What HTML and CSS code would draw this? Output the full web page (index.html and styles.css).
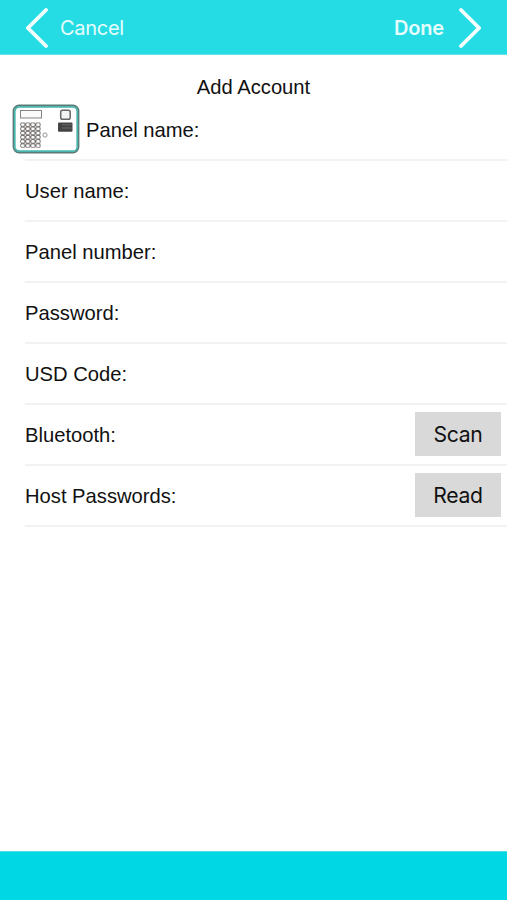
FILE: index.html
```html
<!DOCTYPE html>
<html lang="en">
<head>
<meta charset="utf-8">
<title>Add Account</title>
<link rel="stylesheet" href="styles.css">
</head>
<body>
<header class="bar">
  <div class="nav back">
    <svg width="22" height="40" viewBox="0 0 22 40"><path d="M20 2 2 20 20 38" /></svg>
    <span class="cancel">Cancel</span>
  </div>
  <div class="nav">
    <span class="done">Done</span>
    <svg width="22" height="40" viewBox="0 0 22 40"><path d="M2 2 20 20 2 38" /></svg>
  </div>
</header>
<main>
  <h1>Add Account</h1>
  <div class="row first">
    <svg class="panel" width="68" height="50" viewBox="0 0 68 50">
      <defs>
        <pattern id="keys" x="8.2" y="18.500" width="5.100" height="4.200" patternUnits="userSpaceOnUse">
          <ellipse cx="2.550" cy="2.100" rx="2.150" ry="2" fill="#fff" stroke="#6b6663" stroke-width=".9"/>
        </pattern>
      </defs>
      <rect x="1.500" y="1.500" width="65" height="47" rx="5.500" fill="#fff" stroke="#5c7b77" stroke-width="1.800"/>
      <rect x="2.800" y="2.800" width="62.400" height="44.400" rx="4.500" fill="none" stroke="#48b5ae" stroke-width="1.700"/>
      <rect x="8.500" y="6.500" width="21" height="7.500" fill="#fafafa" stroke="#858585"/>
      <rect x="8.200" y="18.500" width="20.400" height="25.200" fill="url(#keys)"/>
      <circle cx="33" cy="31" r="2.100" fill="none" stroke="#888" stroke-width=".9"/>
      <rect x="48.700" y="6.200" width="9.500" height="9" rx="1.800" fill="#f4f4f4" stroke="#666" stroke-width="1.500"/>
      <rect x="46" y="18.500" width="14.500" height="9.300" rx="1" fill="#444"/>
      <path d="M50 20.800h9.500M50 24h9.500" stroke="#6c6c6c" stroke-width="1"/>
    </svg>
    <label>Panel name:</label>
  </div>
  <div class="row"><label>User name:</label></div>
  <div class="row"><label>Panel number:</label></div>
  <div class="row"><label>Password:</label></div>
  <div class="row"><label>USD Code:</label></div>
  <div class="row"><label>Bluetooth:</label><button>Scan</button></div>
  <div class="row"><label>Host Passwords:</label><button>Read</button></div>
</main>
<footer></footer>
</body>
</html>
```
FILE: styles.css
```css
* { box-sizing: border-box; }
body {
  margin: 0;
  height: 900px;
  display: flex;
  flex-direction: column;
  background: #fff;
  color: #111;
  font-family: "Liberation Sans", Arial, sans-serif;
  font-size: 20.2px;
}
.bar {
  height: 55px;
  padding: 1px 26px 0;
  display: flex;
  justify-content: space-between;
  align-items: center;
  background: #25dce4;
  border-bottom: 1px solid #62e4ea;
  color: #e6fcfd;
}
.nav { display: flex; align-items: center; }
.nav svg { fill: none; stroke: #f4ffff; stroke-width: 3.8; stroke-linecap: round; stroke-linejoin: miter; }
.cancel, .done { font-family: Inter, sans-serif; font-size: 20px; }
.cancel { margin-left: 12px; letter-spacing: -.3px; }
.done { margin-right: 15px; font-weight: 600; letter-spacing: -.2px; }
main { flex: 1; }
h1 {
  margin: 0;
  height: 45px;
  padding-top: 20px;
  line-height: 24px;
  font-size: 20.2px;
  font-weight: 400;
  text-align: center;
}
.row {
  height: 61px;
  margin-left: 25px;
  padding-right: 6px;
  display: flex;
  align-items: center;
  justify-content: space-between;
  border-bottom: 2px solid #f2f2f2;
}
.row label { padding-top: 1px; }
.row.first { justify-content: flex-start; }
.panel { margin: 0 6px 2px -13px; }
button {
  width: 86px;
  height: 44px;
  margin-bottom: 1px;
  padding: 0 0 1px;
  border: 0;
  background: #d9d9d9;
  color: #111;
  font: 21.2px Inter, sans-serif;
  letter-spacing: -.3px;
}
footer { height: 49px; background: #00d7e4; border-top: 1px solid #50dfe8; }
```
